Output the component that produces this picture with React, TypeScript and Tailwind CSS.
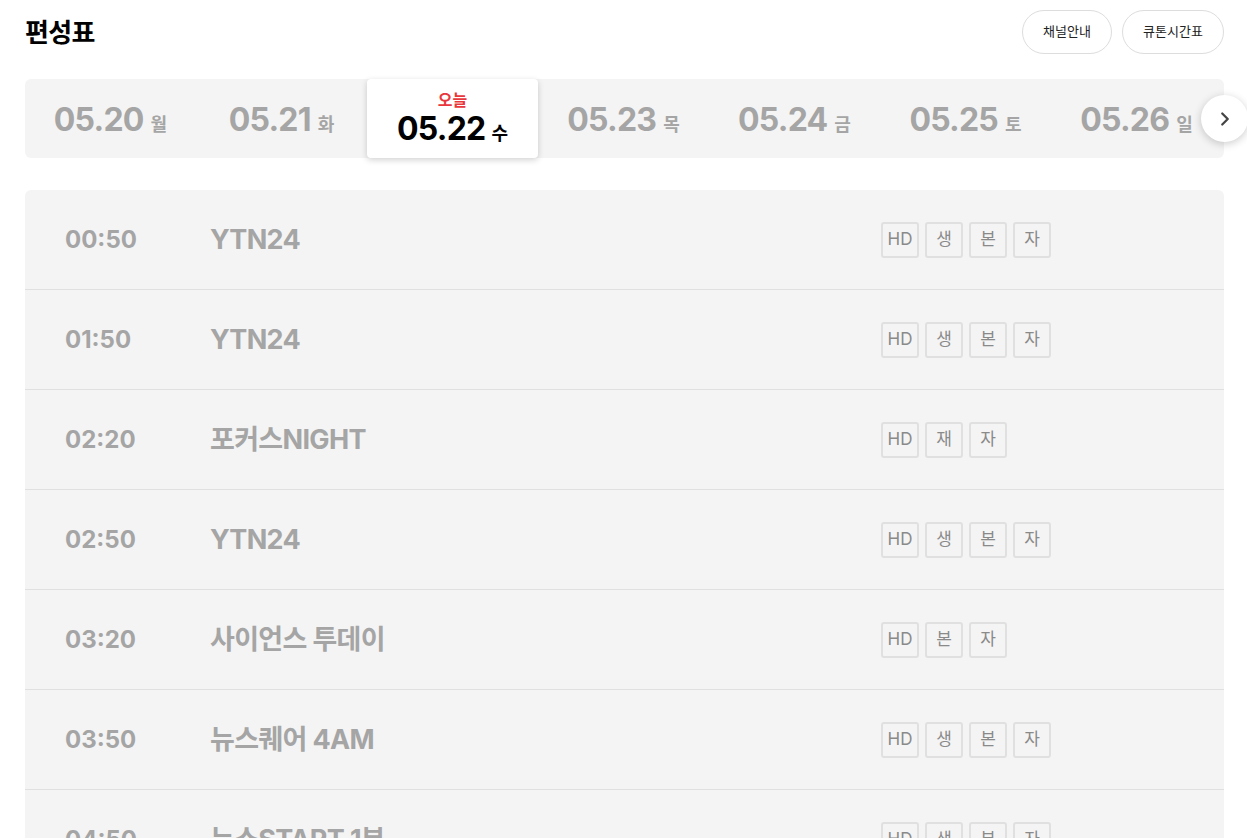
import { ChevronRight } from "lucide-react";

const dates = [
  { date: "05.20", day: "월" },
  { date: "05.21", day: "화" },
  { date: "05.22", day: "수", today: true },
  { date: "05.23", day: "목" },
  { date: "05.24", day: "금" },
  { date: "05.25", day: "토" },
  { date: "05.26", day: "일" },
];

const programs = [
  { time: "00:50", title: "YTN24", tags: ["HD", "생", "본", "자"] },
  { time: "01:50", title: "YTN24", tags: ["HD", "생", "본", "자"] },
  { time: "02:20", title: "포커스NIGHT", tags: ["HD", "재", "자"] },
  { time: "02:50", title: "YTN24", tags: ["HD", "생", "본", "자"] },
  { time: "03:20", title: "사이언스 투데이", tags: ["HD", "본", "자"] },
  { time: "03:50", title: "뉴스퀘어 4AM", tags: ["HD", "생", "본", "자"] },
  { time: "04:50", title: "뉴스START 1부", tags: ["HD", "생", "본", "자"] },
];

export default function App() {
  return (
    <div
      className="min-h-screen bg-white text-[#111]"
      style={{ fontFamily: "Inter, 'Noto Sans CJK KR', sans-serif" }}
    >
      <div className="pl-[25px] pr-[23px] pt-[10px]">
        <header className="flex items-center justify-between">
          <h1 className="text-[26px] font-bold tracking-tight text-black">편성표</h1>
          <div className="flex gap-[10px]">
            <button className="h-[44px] w-[90px] rounded-full border border-[#dddddd] text-[13px] text-[#222]">
              채널안내
            </button>
            <button className="h-[44px] w-[102px] rounded-full border border-[#dddddd] text-[13px] text-[#222]">
              큐톤시간표
            </button>
          </div>
        </header>

        <div className="relative mt-[25px] flex h-[79px] rounded-md bg-[#f4f4f4]">
          {dates.map((d) =>
            d.today ? (
              <div
                key={d.date}
                className="flex w-[171px] flex-col items-center justify-center rounded-[4px] bg-white pt-[6px] shadow-[0_2px_6px_rgba(0,0,0,0.18)]"
              >
                <span className="text-[16px] font-bold leading-[20px] text-[#e8383d]">오늘</span>
                <span className="flex items-baseline gap-[6px] leading-[38px]">
                  <span className="text-[32px] font-bold tracking-tight text-black">{d.date}</span>
                  <span className="text-[18px] font-bold text-black">{d.day}</span>
                </span>
              </div>
            ) : (
              <div
                key={d.date}
                className="flex w-[171px] items-baseline justify-center gap-[7px] pt-[17px] text-[#a5a5a5]"
              >
                <span className="text-[32px] font-bold tracking-tight">{d.date}</span>
                <span className="text-[18px] font-bold">{d.day}</span>
              </div>
            )
          )}
          <button className="absolute right-[-24px] top-[16px] flex h-[47px] w-[47px] items-center justify-center rounded-full bg-white shadow-[0_2px_8px_rgba(0,0,0,0.2)]">
            <ChevronRight className="h-[22px] w-[22px] text-[#444]" strokeWidth={2.5} />
          </button>
        </div>

        <div className="mt-[32px] rounded-t-md bg-[#f4f4f4]">
          {programs.map((p, i) => (
            <div
              key={i}
              className="flex h-[100px] items-center border-b border-[#e0e0e0] pl-[40px] pt-[1px]"
            >
              <span className="w-[145px] text-[24px] font-bold text-[#a5a5a5]">{p.time}</span>
              <span className="w-[671px] text-[27px] font-bold tracking-tight text-[#a5a5a5]">
                {p.title}
              </span>
              <div className="flex gap-[6px]">
                {p.tags.map((t, j) => (
                  <span
                    key={j}
                    className="flex h-[36px] w-[38px] items-center justify-center rounded-[3px] border-2 border-[#e0e0e0] text-[17px] text-[#8a8a8a]"
                  >
                    {t}
                  </span>
                ))}
              </div>
            </div>
          ))}
        </div>
      </div>
    </div>
  );
}
